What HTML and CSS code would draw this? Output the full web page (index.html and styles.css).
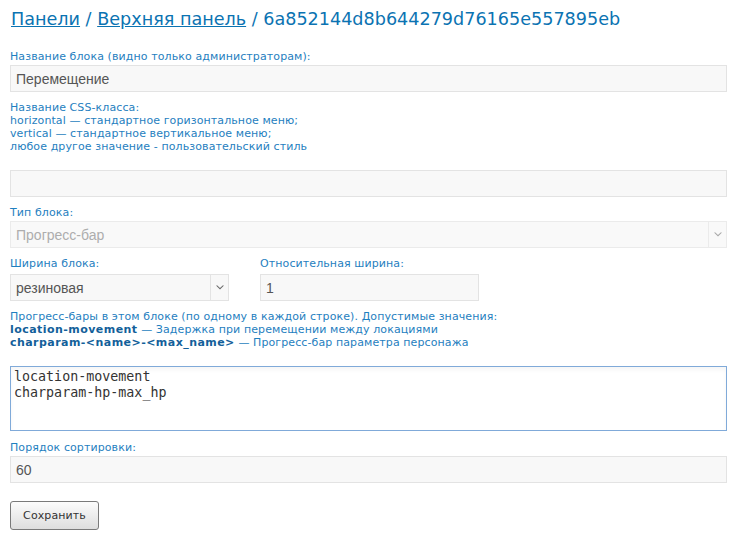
FILE: index.html
```html
<!DOCTYPE html>
<html lang="ru">
<head>
<meta charset="utf-8">
<title>Верхняя панель</title>
<link rel="stylesheet" href="styles.css">
</head>
<body>
<h1 class="title"><a href="#">Панели</a> / <a href="#">Верхняя панель</a> / 6a852144d8b644279d76165e557895eb</h1>

<form class="form">
  <div class="label">Название блока (видно только администраторам):</div>
  <div class="field input">Перемещение</div>

  <div class="help">Название CSS-класса:<br>horizontal — стандартное горизонтальное меню;<br>vertical — стандартное вертикальное меню;<br>любое другое значение - пользовательский стиль</div>
  <div class="field input"></div>

  <div class="label">Тип блока:</div>
  <div class="field select disabled">
    <span class="select-text">Прогресс-бар</span>
    <span class="select-arrow"><svg width="8" height="5" viewBox="0 0 8 5"><path d="M0 0.5 L4 4.5 L8 0.5 L6.6 0.5 L4 3 L1.4 0.5 Z" fill="#a5a5a5"/></svg></span>
  </div>

  <div class="row">
    <div class="col">
      <div class="label label-row">Ширина блока:</div>
      <div class="field select">
        <span class="select-text">резиновая</span>
        <span class="select-arrow"><svg width="8" height="5" viewBox="0 0 8 5"><path d="M0 0.5 L4 4.5 L8 0.5 L6.6 0.5 L4 3 L1.4 0.5 Z" fill="#666"/></svg></span>
      </div>
    </div>
    <div class="col">
      <div class="label label-row">Относительная ширина:</div>
      <div class="field input">1</div>
    </div>
  </div>

  <div class="help">Прогресс-бары в этом блоке (по одному в каждой строке). Допустимые значения:<br><b>location-movement</b> — Задержка при перемещении между локациями<br><b>charparam-&lt;name&gt;-&lt;max_name&gt;</b> — Прогресс-бар параметра персонажа</div>
  <textarea class="field textarea">location-movement
charparam-hp-max_hp</textarea>

  <div class="label">Порядок сортировки:</div>
  <div class="field input">60</div>

  <button type="button" class="button">Сохранить</button>
</form>
</body>
</html>
```

FILE: styles.css
```css
html, body {
  margin: 0;
  padding: 0;
  background: #ffffff;
}

body {
  padding: 0 14px 0 10px;
  font-family: "DejaVu Sans", Verdana, sans-serif;
  font-size: 11px;
  letter-spacing: 0.1px;
  color: #1f80c0;
}

.title {
  margin: 8px 0 20px 1px;
  font-size: 17.6px;
  line-height: 22px;
  font-weight: normal;
  letter-spacing: 0;
  color: #0b73b2;
}

.title a {
  color: #0b73b2;
  text-decoration: underline;
}

.form {
  margin: 0;
}

.label {
  line-height: 13px;
  margin-bottom: 2px;
}

.label-row {
  margin-bottom: 4px;
}

.help {
  line-height: 13px;
  margin-bottom: 17px;
}

.help b {
  color: #135f9a;
  letter-spacing: 0.45px;
}

.field {
  display: flex;
  align-items: center;
  box-sizing: border-box;
  height: 27px;
  margin: 0 0 9px;
  border: 1px solid #e3e3e3;
  background: #f8f8f8;
  font-family: "Liberation Sans", Arial, sans-serif;
  font-size: 14px;
  letter-spacing: 0;
  color: #555;
}

.input {
  padding: 0 5px;
}

.select {
  padding: 0;
}

.select-text {
  flex: 1;
  padding: 0 5px;
}

.select-arrow {
  display: flex;
  align-items: center;
  justify-content: center;
  width: 17px;
  height: 100%;
  border-left: 1px solid #e3e3e3;
}

.select.disabled {
  color: #adadad;
  background: #f9f9f9;
  border-color: #ebebeb;
}

.select.disabled .select-arrow {
  border-left-color: #ebebeb;
}

.row {
  display: flex;
  gap: 31px;
  margin-bottom: 0;
}

.col {
  width: 219px;
}

.col .field {
  width: 219px;
}

.textarea {
  display: block;
  width: 100%;
  height: 65px;
  margin-bottom: 10px;
  padding: 2px 3px;
  border: 1px solid #80aad9;
  background: #ffffff;
  box-shadow: inset 0 3px 4px rgba(0, 0, 0, 0.04);
  font-family: "DejaVu Sans Mono", monospace;
  font-size: 13.333px;
  line-height: 16px;
  color: #333;
  resize: none;
  outline: none;
}

.button {
  display: block;
  box-sizing: border-box;
  width: 89px;
  height: 29px;
  margin-top: 18px;
  padding: 0;
  border: 1px solid #7a7a7a;
  border-radius: 3px;
  background: linear-gradient(#fcfcfc, #dedede);
  font-family: "DejaVu Sans", Verdana, sans-serif;
  font-size: 11px;
  letter-spacing: 0.1px;
  color: #333;
}
```
